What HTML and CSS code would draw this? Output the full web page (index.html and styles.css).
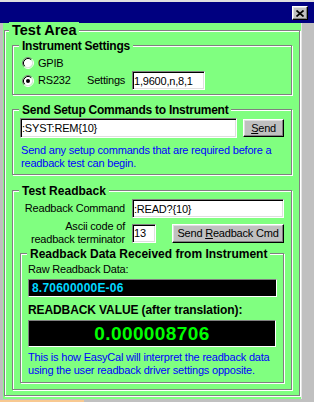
FILE: index.html
```html
<!DOCTYPE html>
<html lang="en">
  <head>
    <meta charset="UTF-8" />
    <meta name="viewport" content="width=device-width, initial-scale=1.0" />
    <title>Test Area</title>
    <link rel="stylesheet" href="styles.css">
  </head>
  <body>
    <div class="titlebar">
      <button class="close-btn" title="Close">
        <svg width="8" height="7" viewBox="0 0 8 7">
          <path d="M0.5 0.5 L7.5 6.5 M7.5 0.5 L0.5 6.5" stroke="#000" stroke-width="1.7" fill="none" />
        </svg>
      </button>
    </div>

    <div class="main">
      <div class="panel">
        <div class="group outer">
          <div class="group-title big">Test Area</div>

          <!-- Instrument settings -->
          <div class="group instrument">
            <div class="group-title narrow">Instrument Settings</div>
            <div class="option first">
              <svg class="radio" width="12" height="12" viewBox="0 0 12 12">
                <circle cx="6" cy="6" r="4.5" fill="#fff" />
                <path d="M2.11 9.89A5.5 5.5 0 0 1 9.89 2.11" fill="none" stroke="#808080" />
                <path d="M2.82 9.18A4.5 4.5 0 0 1 9.18 2.82" fill="none" stroke="#000" />
                <path d="M9.89 2.11A5.5 5.5 0 0 1 2.11 9.89" fill="none" stroke="#fff" />
                <path d="M9.18 2.82A4.5 4.5 0 0 1 2.82 9.18" fill="none" stroke="#dfdfdf" />
              </svg>
              <span class="option-label">GPIB</span>
            </div>
            <div class="option">
              <svg class="radio" width="12" height="12" viewBox="0 0 12 12">
                <circle cx="6" cy="6" r="4.5" fill="#fff" />
                <path d="M2.11 9.89A5.5 5.5 0 0 1 9.89 2.11" fill="none" stroke="#808080" />
                <path d="M2.82 9.18A4.5 4.5 0 0 1 9.18 2.82" fill="none" stroke="#000" />
                <path d="M9.89 2.11A5.5 5.5 0 0 1 2.11 9.89" fill="none" stroke="#fff" />
                <path d="M9.18 2.82A4.5 4.5 0 0 1 2.82 9.18" fill="none" stroke="#dfdfdf" />
                <circle cx="6" cy="6" r="2" fill="#000" />
              </svg>
              <span class="option-label">RS232</span>
              <span class="settings-label">Settings</span>
              <input type="text" class="field settings" value="1,9600,n,8,1" />
            </div>
          </div>

          <!-- Setup commands -->
          <div class="group setup">
            <div class="group-title narrow">Send Setup Commands to Instrument</div>
            <div class="row">
              <input type="text" class="field setup-cmd" value=":SYST:REM{10}" />
              <button class="btn send-btn"><u>S</u>end</button>
            </div>
            <p class="note">Send any setup commands that are required before a readback test can begin.</p>
          </div>

          <!-- Readback -->
          <div class="group readback">
            <div class="group-title">Test Readback</div>
            <div class="row first-row">
              <label class="form-label" for="cmd">Readback Command</label>
              <input type="text" id="cmd" class="field readback-cmd" value=":READ?{10}" />
            </div>
            <div class="row second-row">
              <label class="form-label" for="term">Ascii code of<br />readback terminator</label>
              <input type="text" id="term" class="field term" value="13" />
              <button class="btn readback-btn">Send <u>R</u>eadback Cmd</button>
            </div>

            <div class="group received">
              <div class="group-title">Readback Data Received from Instrument</div>
              <div class="raw-label">Raw Readback Data:</div>
              <div class="display raw">8.70600000E-06</div>
              <div class="value-label">READBACK VALUE (after translation):</div>
              <div class="display value">0.000008706</div>
              <p class="note">This is how EasyCal will interpret the readback data using the user readback driver settings opposite.</p>
            </div>
          </div>
        </div>
      </div>
    </div>

    <div class="bottom">
      <div class="peach"></div>
    </div>
  </body>
</html>
```

FILE: styles.css
```css
/* Base */
* {
  box-sizing: border-box;
}

body {
  margin: 0;
  width: 314px;
  height: 402px;
  overflow: hidden;
  background-color: #c0c0c0;
  font-family: "Liberation Sans", Arial, sans-serif;
  font-size: 11px;
  line-height: 13px;
  letter-spacing: -0.2px;
  color: #000;
}

/* Title bar */
.titlebar {
  height: 23px;
  border-top: 2px solid #dfdfdf;
  background-color: #000080;
  display: flex;
  justify-content: flex-end;
  align-items: flex-start;
  padding: 4px 6px 0 0;
}

.close-btn {
  width: 16px;
  height: 14px;
  padding: 0;
  display: flex;
  align-items: center;
  justify-content: center;
  background-color: #c0c0c0;
  border: 1px solid;
  border-color: #fff #000 #000 #fff;
  box-shadow: inset -1px -1px 0 #808080, inset 1px 1px 0 #dfdfdf;
}

/* Green panel */
.main {
  display: flex;
}

.panel {
  margin-left: 3px;
  width: 299px;
  height: 376px;
  padding: 7px 0 0 1px;
  background-color: #80ff80;
  border-right: 1px solid #e4e4e4;
}

/* Group boxes */
.group {
  border: 1px solid #808080;
  box-shadow: inset 1px 1px 0 #fff, 1px 1px 0 #fff;
  padding: 0 7px;
}

.group-title {
  width: fit-content;
  margin: -7px 0 0 -1px;
  padding: 0 3px;
  background-color: #80ff80;
  font-size: 12px;
  line-height: 14px;
  font-weight: bold;
  letter-spacing: 0;
}

.group-title.narrow {
  letter-spacing: -0.25px;
}

.group-title.big {
  margin: -9px 0 0 -3px;
  font-size: 14.5px;
  line-height: 17px;
}

.outer {
  width: 296px;
  height: 366px;
}

.instrument {
  margin-top: 6px;
  height: 50px;
}

.setup {
  margin-top: 14px;
  height: 66px;
}

.readback {
  margin-top: 15px;
  height: 200px;
}

.received {
  margin-top: 7px;
  height: 130px;
}

/* Radio options */
.option {
  display: flex;
  align-items: center;
  height: 19px;
  margin-left: 2px;
}

.option.first {
  height: 16px;
  margin-top: 2px;
}

.radio {
  flex: none;
  margin-right: 4px;
}

.option-label {
  width: 49px;
}

.settings-label {
  width: 45px;
}

/* Inputs and buttons */
.field {
  height: 19px;
  padding: 0 1px;
  border: 1px solid;
  border-color: #808080 #fff #fff #808080;
  box-shadow: inset 1px 1px 0 #000, inset -1px -1px 0 #dfdfdf;
  background-color: #fff;
  font: inherit;
  letter-spacing: inherit;
  color: #000;
  outline: none;
}

.settings {
  width: 73px;
}

.btn {
  height: 18px;
  padding: 0;
  border: 1px solid;
  border-color: #fff #000 #000 #fff;
  box-shadow: inset -1px -1px 0 #808080, inset 1px 1px 0 #dfdfdf;
  background-color: #c0c0c0;
  font: inherit;
  letter-spacing: inherit;
  color: #000;
}

.row {
  display: flex;
  align-items: center;
}

.setup .row {
  margin-top: 1px;
}

.setup-cmd {
  width: 218px;
  height: 20px;
}

.send-btn {
  width: 41px;
  margin-left: 6px;
}

.note {
  margin: 6px 0 0 1px;
  color: #0000ff;
}

/* Readback */
.first-row {
  margin-top: 1px;
}

.second-row {
  margin-top: 2px;
}

.form-label {
  width: 105px;
  margin-right: 7px;
  text-align: right;
}

.readback-cmd {
  width: 152px;
}

.term {
  width: 24px;
}

.readback-btn {
  width: 112px;
  height: 19px;
  margin-left: 16px;
}

.raw-label {
  margin-top: 2px;
}

.display {
  background-color: #000;
  border: 1px solid;
  border-color: #808080 #fff #fff #808080;
  font-weight: bold;
}

.raw {
  margin-top: 3px;
  width: 249px;
  height: 18px;
  padding-left: 3px;
  font-size: 12px;
  line-height: 16px;
  letter-spacing: 0.2px;
  color: #00d8ff;
}

.value-label {
  margin-top: 6px;
  font-size: 12px;
  line-height: 14px;
  font-weight: bold;
  letter-spacing: -0.1px;
}

.value {
  margin-top: 3px;
  width: 248px;
  height: 27px;
  font-size: 19px;
  line-height: 25px;
  text-align: center;
  letter-spacing: 0.4px;
  color: #00ff00;
}

.received .note {
  margin: 4px 0 0 0;
}

/* Bottom strip */
.bottom {
  height: 3px;
  padding-top: 1px;
}

.peach {
  width: 84px;
  height: 2px;
  background-color: #f8c890;
}
```
